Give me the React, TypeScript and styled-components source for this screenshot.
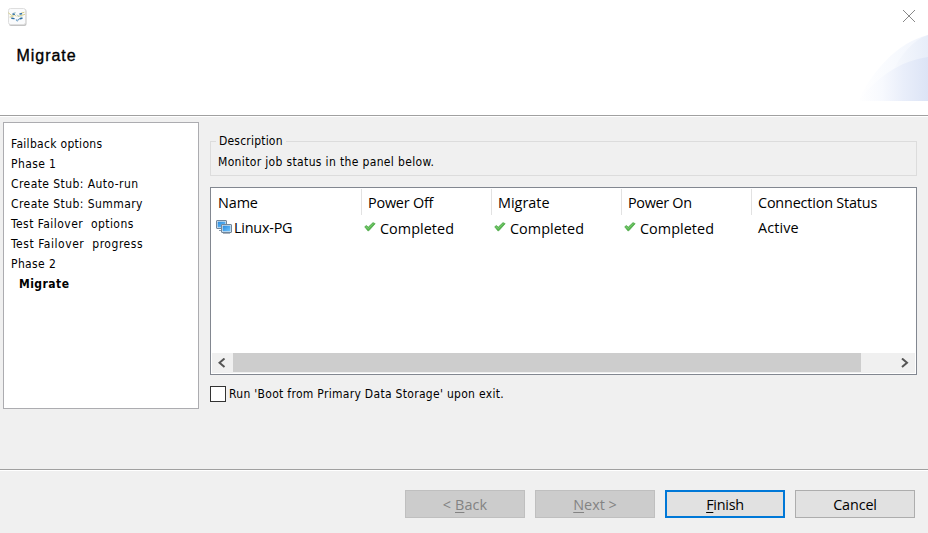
import React from 'react';
import styled, { createGlobalStyle } from 'styled-components';

const GlobalStyle = createGlobalStyle`
  * { box-sizing: border-box; }
  body { margin: 0; background: #f0f0f0; overflow: hidden; }
`;

const tahoma = `'DejaVu Sans Condensed', 'DejaVu Sans', sans-serif`;
const segoe = `'Open Sans', 'Noto Sans', sans-serif`;

const Dialog = styled.div`
  width: 928px;
  height: 533px;
  display: flex;
  flex-direction: column;
  background: #f0f0f0;
  color: #000;
  font: 12px/20px ${tahoma};
  white-space: pre;
`;

const Header = styled.header`
  height: 115px;
  flex: none;
  display: flex;
  justify-content: space-between;
  background: #fff;
`;

const HeaderLeft = styled.div`
  display: flex;
  flex-direction: column;
  padding: 8px 0 0 8px;
`;

const HeaderRight = styled.div`
  display: flex;
  flex-direction: column;
  align-items: flex-end;
`;

const CloseButton = styled.button`
  width: 26px;
  height: 35px;
  display: flex;
  align-items: flex-start;
  padding: 9px 0 0;
  border: 0;
  background: none;
`;

const Title = styled.h1<{ $track: number }>`
  margin: 17px 0 0 8.5px;
  font: 500 16px/24px 'Liberation Sans', Arial, sans-serif;
  letter-spacing: ${(p) => p.$track}px;
  -webkit-text-stroke: 0.35px #000;
`;

const Divider = styled.div`
  height: 2px;
  flex: none;
  background: #fff;
  border-top: 1px solid #a0a0a0;
`;

const Body = styled.main`
  height: 352px;
  flex: none;
  display: flex;
  gap: 11px;
  padding: 5px 11px 0 3px;
`;

const StepList = styled.ol`
  width: 196px;
  height: 287px;
  flex: none;
  margin: 0;
  padding: 11px 7px;
  list-style: none;
  background: #fff;
  border: 1px solid #acacb0;
`;

const Step = styled.li<{ $current?: boolean; $track?: number }>`
  height: 20px;
  padding-left: ${(p) => (p.$current ? 8 : 0)}px;
  font-weight: ${(p) => (p.$current ? 700 : 400)};
  letter-spacing: ${(p) => p.$track ?? 0}px;
`;

const Content = styled.section`
  flex: 1;
  display: flex;
  flex-direction: column;
`;

const Group = styled.fieldset`
  height: 45px;
  margin: 9px 0 0;
  padding: 0 7px;
  border: 1px solid #dcdcdc;
  min-width: 0;
`;

const Legend = styled.legend<{ $track: number }>`
  height: 20px;
  margin-left: -2px;
  padding: 0 3px;
  letter-spacing: ${(p) => p.$track}px;
`;

const GroupText = styled.div<{ $track: number }>`
  line-height: 20px;
  margin-top: 1px;
  letter-spacing: ${(p) => p.$track}px;
`;

const TableFrame = styled.div`
  height: 188px;
  margin-top: 11px;
  display: flex;
  flex-direction: column;
  background: #fff;
  border: 1px solid #828790;
  padding: 1px;
`;

const Row = styled.div<{ $height: number }>`
  height: ${(p) => p.$height}px;
  flex: none;
  display: grid;
  grid-template-columns: 150px 130px 130px 130px 1fr;
  font: 14.4px/26px ${segoe};
`;

const HeadCell = styled.div<{ $track?: number }>`
  height: 26px;
  padding-left: 6px;
  letter-spacing: ${(p) => p.$track ?? 0}px;
  line-height: 27px;
  &:not(:last-child) { border-right: 1px solid #e2e2e2; }
`;

const Cell = styled.div<{ $pad: number; $top: number; $track?: number }>`
  display: flex;
  padding: ${(p) => p.$top}px 0 0 ${(p) => p.$pad}px;
  letter-spacing: ${(p) => p.$track ?? 0}px;
`;

const IconSlot = styled.span<{ $width: number; $top: number }>`
  width: ${(p) => p.$width}px;
  flex: none;
  padding-top: ${(p) => p.$top}px;
  line-height: 0;
`;

const Scrollbar = styled.div`
  height: 20px;
  margin-top: auto;
  display: flex;
  background: #f0f0f0;
`;

const ScrollArrow = styled.span<{ $end?: boolean }>`
  width: 21px;
  margin-left: ${(p) => (p.$end ? 'auto' : '0')};
  padding: 5px 0 0 ${(p) => (p.$end ? 7 : 6)}px;
  line-height: 0;
`;

const Thumb = styled.div`
  width: 628px;
  height: 19px;
  background: #cdcdcd;
`;

const CheckLabel = styled.label<{ $track: number }>`
  display: flex;
  align-items: center;
  gap: 3px;
  height: 20px;
  margin-top: 9px;
  letter-spacing: ${(p) => p.$track}px;
`;

const CheckBox = styled.span`
  width: 16px;
  height: 16px;
  background: #fff;
  border: 1px solid #333;
`;

const Footer = styled.footer`
  display: flex;
  justify-content: flex-end;
  gap: 10px;
  padding: 19px 13px 0 0;
`;

const Button = styled.button<{ $kind?: 'primary' | 'disabled'; $track?: number }>`
  width: 120px;
  height: 28px;
  padding: 1px 0 0;
  border: ${(p) => (p.$kind === 'primary' ? '2px solid #0078d7' : `1px solid ${p.$kind ? '#bfbfbf' : '#adadad'}`)};
  background: ${(p) => (p.$kind === 'disabled' ? '#cccccc' : '#e1e1e1')};
  color: ${(p) => (p.$kind === 'disabled' ? '#838383' : '#000')};
  font: 14.4px/20px ${segoe};
  letter-spacing: ${(p) => p.$track ?? 0}px;
  u { text-decoration-thickness: 1px; text-underline-offset: 2px; text-decoration-skip-ink: none; }
`;

const AppIcon = () => (
  <svg width="20" height="19" viewBox="0 0 20 19">
    <rect x="1" y="1" width="17.5" height="17" rx="2" fill="#c4c4c4" />
    <rect x="0.5" y="0.5" width="17" height="16" rx="2" fill="#fafbfc" stroke="#dedede" />
    <g fill="none" strokeLinecap="round">
      <path d="M0.5 5L3.5 7.3L6.5 7L8 8M10 8.5L13 7.5L16.5 6.5M2 9L5 8.6M13.5 5L16 4.4" stroke="#d6cf8c" strokeWidth="1" />
      <path d="M6 4.8H7.5M9 7L11 8.3M12.5 9H14" stroke="#a9c7c4" strokeWidth="0.9" />
      <path d="M3.8 10.2L6 10.6M12 10.7L14 10.2M5 6L6.3 6.2M12 6L13.5 5.8" stroke="#2a6da3" strokeWidth="1.4" />
      <path d="M8.3 11.8L9.3 13M10 12L10.8 11.3" stroke="#6a9cc4" strokeWidth="1.1" />
    </g>
  </svg>
);

const Swoosh = () => (
  <svg width="72" height="66" viewBox="0 0 72 66">
    <defs>
      <linearGradient id="outer">
        <stop offset="0" stopColor="#fff" />
        <stop offset="0.5" stopColor="#f8fafe" />
        <stop offset="1" stopColor="#f0f4fc" />
      </linearGradient>
      <linearGradient id="middle">
        <stop offset="0" stopColor="#f7f9fd" />
        <stop offset="1" stopColor="#e7edf9" />
      </linearGradient>
      <linearGradient id="inner">
        <stop offset="0" stopColor="#fff" />
        <stop offset="0.35" stopColor="#f7f9fe" />
        <stop offset="0.65" stopColor="#e9eefa" />
        <stop offset="1" stopColor="#dce4f6" />
      </linearGradient>
    </defs>
    <path d="M2 66C16 37 40 8 72 0V66Z" fill="url(#outer)" />
    <path d="M36 38C44 20 57 5 72 0V50H36Z" fill="url(#middle)" />
    <path d="M2 66C20 44 42 26 72 22V66Z" fill="url(#inner)" />
  </svg>
);

const Monitors = () => (
  <svg width="16" height="14" viewBox="0 0 16 14">
    <defs>
      <linearGradient id="screen" x2="1" y2="1">
        <stop offset="0" stopColor="#2789de" />
        <stop offset="1" stopColor="#70c5ff" />
      </linearGradient>
    </defs>
    <path d="M3 10.5H6" stroke="#8c9bab" />
    <rect x="0.5" y="0.5" width="10" height="8" rx="0.5" fill="#d9e2ea" stroke="#71869b" />
    <rect x="1.7" y="1.7" width="7.6" height="5.6" fill="url(#screen)" />
    <rect x="5.5" y="4.5" width="10" height="8" rx="0.5" fill="#d9e2ea" stroke="#71869b" />
    <rect x="6.7" y="5.7" width="7.6" height="5.6" fill="url(#screen)" />
    <path d="M7 13.5H14" stroke="#a8b2bd" />
  </svg>
);

const Check = () => (
  <svg width="12" height="10" viewBox="0 0 12 10">
    <path d="M0.7 4.8L2.4 3.5L4.3 5.1L9 0.6L11.2 1.7L4.8 8.8L3.8 8.8Z" fill="#55b54d" stroke="#3f9f3d" strokeWidth="0.6" strokeLinejoin="round" />
    <path d="M1.8 4.5L4.3 6.5L9.3 1.4" fill="none" stroke="#8bd47f" strokeWidth="0.8" />
  </svg>
);

const Chevron = ({ right = false }: { right?: boolean }) => (
  <svg width="8" height="10" viewBox="0 0 8 10">
    <path d={right ? 'M1 0.5L6 4.8L1 9' : 'M6.5 0.5L1.5 4.8L6.5 9'} fill="none" stroke="#555" strokeWidth="2" />
  </svg>
);

const steps = [
  { label: 'Failback options', track: 0.3 },
  { label: 'Phase 1', track: 0.4 },
  { label: 'Create Stub: Auto-run', track: 0.43 },
  { label: 'Create Stub: Summary', track: 0.43 },
  { label: 'Test Failover  options', track: 0.45 },
  { label: 'Test Failover  progress', track: 0.54 },
  { label: 'Phase 2', track: 0.38 },
  { label: 'Migrate', current: true, track: 0.45 },
];

const columns = [
  { label: 'Name', track: -0.1 },
  { label: 'Power Off', track: -0.2 },
  { label: 'Migrate', track: 0 },
  { label: 'Power On', track: -0.3 },
  { label: 'Connection Status', track: -0.18 },
];

export default function App() {
  return (
    <>
      <GlobalStyle />
      <Dialog>
        <Header>
          <HeaderLeft>
            <AppIcon />
            <Title $track={0.95}>Migrate</Title>
          </HeaderLeft>
          <HeaderRight>
            <CloseButton aria-label="Close">
              <svg width="14" height="14" viewBox="0 0 14 14">
                <path d="M1 1L13 13M13 1L1 13" stroke="#888" strokeWidth="1" />
              </svg>
            </CloseButton>
            <Swoosh />
          </HeaderRight>
        </Header>
        <Divider />
        <Body>
          <StepList>
            {steps.map((s) => (
              <Step key={s.label} $current={s.current} $track={s.track}>{s.label}</Step>
            ))}
          </StepList>
          <Content>
            <Group>
              <Legend $track={0.2}>Description</Legend>
              <GroupText $track={0.35}>Monitor job status in the panel below.</GroupText>
            </Group>
            <TableFrame>
              <Row $height={26}>
                {columns.map((c) => (
                  <HeadCell key={c.label} $track={c.track}>{c.label}</HeadCell>
                ))}
              </Row>
              <Row $height={28}>
                <Cell $pad={4} $top={0} $track={-0.22}>
                  <IconSlot $width={18} $top={5}><Monitors /></IconSlot>
                  Linux-PG
                </Cell>
                {['off', 'migrate', 'on'].map((k) => (
                  <Cell key={k} $pad={2} $top={1} $track={0.05}>
                    <IconSlot $width={16} $top={6}><Check /></IconSlot>
                    Completed
                  </Cell>
                ))}
                <Cell $pad={6} $top={0} $track={0.1}>Active</Cell>
              </Row>
              <Scrollbar>
                <ScrollArrow><Chevron /></ScrollArrow>
                <Thumb />
                <ScrollArrow $end><Chevron right /></ScrollArrow>
              </Scrollbar>
            </TableFrame>
            <CheckLabel $track={0.3}>
              <CheckBox />
              Run 'Boot from Primary Data Storage' upon exit.
            </CheckLabel>
          </Content>
        </Body>
        <Divider />
        <Footer>
          <Button $kind="disabled" disabled $track={0.1}>&lt; <u>B</u>ack</Button>
          <Button $kind="disabled" disabled><u>N</u>ext &gt;</Button>
          <Button $kind="primary" $track={-0.25}><u>F</u>inish</Button>
          <Button $track={-0.15}>Cancel</Button>
        </Footer>
      </Dialog>
    </>
  );
}
